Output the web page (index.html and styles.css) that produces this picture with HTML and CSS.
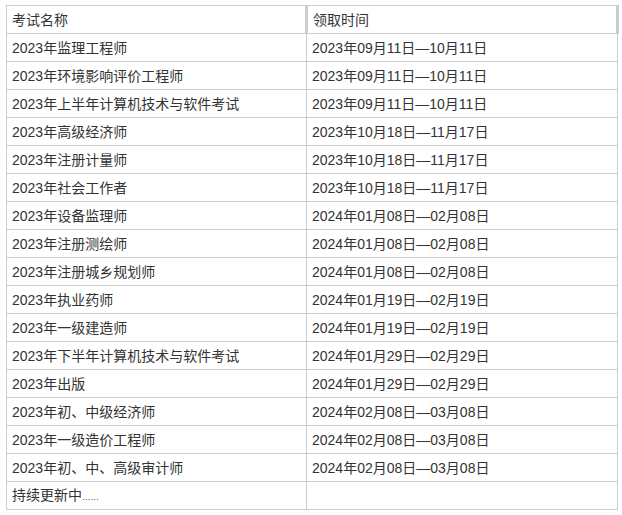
FILE: index.html
```html
<!DOCTYPE html>
<html lang="zh-CN">
<head>
<meta charset="utf-8">
<title>领取时间</title>
<link rel="stylesheet" href="styles.css">
</head>
<body>
<table class="exam-table">
  <colgroup>
    <col class="col-name">
    <col class="col-time">
  </colgroup>
  <thead>
    <tr><th>考试名称</th><th>领取时间</th></tr>
  </thead>
  <tbody>
    <tr><td>2023年监理工程师</td><td>2023年09月11日—10月11日</td></tr>
    <tr><td>2023年环境影响评价工程师</td><td>2023年09月11日—10月11日</td></tr>
    <tr><td>2023年上半年计算机技术与软件考试</td><td>2023年09月11日—10月11日</td></tr>
    <tr><td>2023年高级经济师</td><td>2023年10月18日—11月17日</td></tr>
    <tr><td>2023年注册计量师</td><td>2023年10月18日—11月17日</td></tr>
    <tr><td>2023年社会工作者</td><td>2023年10月18日—11月17日</td></tr>
    <tr><td>2023年设备监理师</td><td>2024年01月08日—02月08日</td></tr>
    <tr><td>2023年注册测绘师</td><td>2024年01月08日—02月08日</td></tr>
    <tr><td>2023年注册城乡规划师</td><td>2024年01月08日—02月08日</td></tr>
    <tr><td>2023年执业药师</td><td>2024年01月19日—02月19日</td></tr>
    <tr><td>2023年一级建造师</td><td>2024年01月19日—02月19日</td></tr>
    <tr><td>2023年下半年计算机技术与软件考试</td><td>2024年01月29日—02月29日</td></tr>
    <tr><td>2023年出版</td><td>2024年01月29日—02月29日</td></tr>
    <tr><td>2023年初、中级经济师</td><td>2024年02月08日—03月08日</td></tr>
    <tr><td>2023年一级造价工程师</td><td>2024年02月08日—03月08日</td></tr>
    <tr><td>2023年初、中、高级审计师</td><td>2024年02月08日—03月08日</td></tr>
    <tr><td>持续更新中<span class="ellipsis">……</span></td><td></td></tr>
  </tbody>
</table>
</body>
</html>
```

FILE: styles.css
```css
html, body {
  margin: 0;
  padding: 0;
  background: #fff;
}
body {
  font-family: "Liberation Sans", "Noto Sans CJK SC", sans-serif;
  font-size: 14px;
  color: #333;
}
.exam-table {
  margin: 5px 0 0 6px;
  border-collapse: collapse;
  table-layout: fixed;
  width: 611px;
}
.col-name { width: 300px; }
.col-time { width: 311px; }
.exam-table th,
.exam-table td {
  border: 1px solid #ccc;
  height: 27px;
  padding: 0 5px;
  text-align: left;
  font-weight: normal;
  line-height: 20px;
  vertical-align: middle;
  white-space: nowrap;
}
.exam-table th {
  border-right: 3px solid #ccc;
}
.ellipsis {
  font-size: 8.5px;
}
```
